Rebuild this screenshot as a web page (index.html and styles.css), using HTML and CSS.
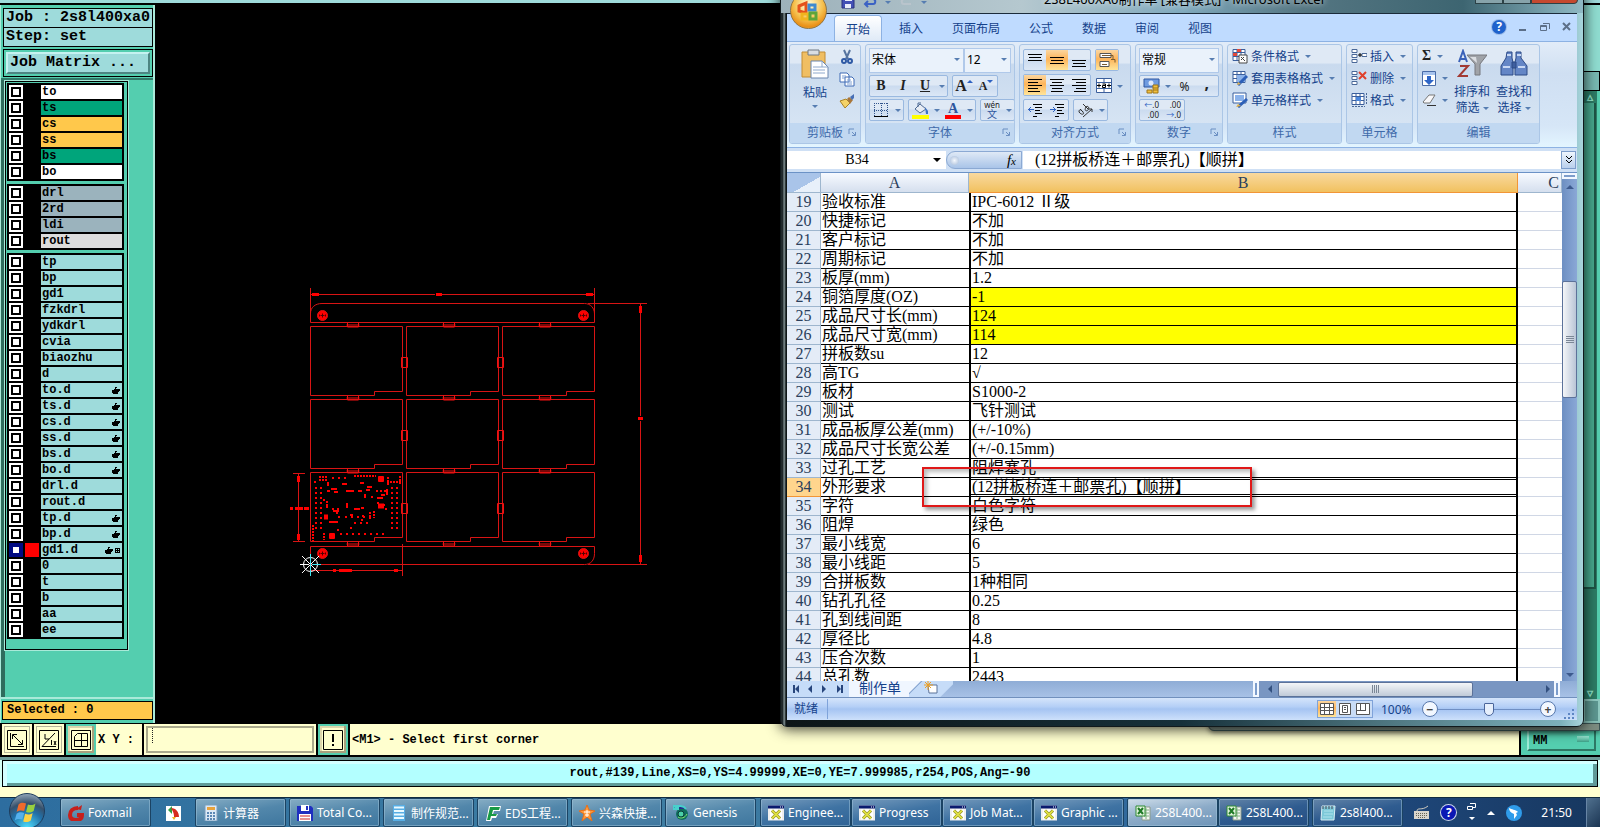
FILE: index.html
```
<!DOCTYPE html>
<html lang="zh-CN">
<head>
    <meta charset="UTF-8">
    <meta name="viewport" content="width=device-width, initial-scale=1.0">
    <title>Genesis - 2s8l400xa0</title>
    <link rel="stylesheet" href="styles.css">
</head>
<body>
    <!-- shared icons -->
    <svg class="defs" aria-hidden="true">
        <symbol id="hand" viewBox="0 0 8 7"><path d="M3 0h2v1H4v1h4v2H7v1H6v2H1V6H0V3h2V2h1z"/></symbol>
        <symbol id="xapp" viewBox="0 0 16 15">
            <path d="M0 0h16v15H0z" fill="#eee"/><path d="M0 0h16v3H0z" fill="#0a1a6e"/><path d="M12 1h1v1h-1zM14 1h1v1h-1z" fill="#fff"/>
            <path d="M2 4h12v10H2z" fill="#fff"/><path d="M4 5l8 8M12 5l-8 8" stroke="#76761a" stroke-width="3"/><path d="M4 5l8 8M12 5l-8 8" stroke="#dede42" stroke-width="2"/>
        </symbol>
        <symbol id="xls" viewBox="0 0 16 16">
            <path d="M7 2h8v13H7z" fill="#f4f6f2" stroke="#8a9a8a"/><path d="M9 5h5M9 8h5M9 11h5M11 3v11" stroke="#7fb07f"/>
            <path d="M1 1h9v10H1z" fill="#e4f4df" stroke="#2f8b33"/><path d="M3 3l5 6M8 3L3 9" stroke="#1f7a26" stroke-width="2"/>
        </symbol>
        <symbol id="table" viewBox="0 0 16 15">
            <path d="M1 1h12v11H1z" fill="#fff" stroke="#3b5f9c"/><path d="M1 4h12M1 8h12M5 1v11M9 1v11" stroke="#3b5f9c"/>
        </symbol>
        <symbol id="launch" viewBox="0 0 8 8"><path d="M1 6V1h5" fill="none" stroke="#6b8fc2"/><path d="M4 4l3 3M7.500 4v3.500H4" fill="none" stroke="#6b8fc2"/></symbol>
    </svg>

    <div class="workspace">
        <aside class="sidebar">
            <div class="job-head">
                <div class="job-line">Job : 2s8l400xa0</div>
                <div class="job-line">Step: set</div>
                <div class="matrix-frame"><button class="matrix">Job Matrix ...</button></div>
            </div>
            <div class="layer-area">
                <div class="layer-panel">
                    <div class="group">
                        <label class="layer white"><input type="checkbox"><i></i><span>to</span></label>
                        <label class="layer green"><input type="checkbox"><i></i><span>ts</span></label>
                        <label class="layer orange"><input type="checkbox"><i></i><span>cs</span></label>
                        <label class="layer orange"><input type="checkbox"><i></i><span>ss</span></label>
                        <label class="layer green"><input type="checkbox"><i></i><span>bs</span></label>
                        <label class="layer white"><input type="checkbox"><i></i><span>bo</span></label>
                    </div>
                    <div class="group">
                        <label class="layer slate"><input type="checkbox"><i></i><span>drl</span></label>
                        <label class="layer slate"><input type="checkbox"><i></i><span>2rd</span></label>
                        <label class="layer slate"><input type="checkbox"><i></i><span>ldi</span></label>
                        <label class="layer grey"><input type="checkbox"><i></i><span>rout</span></label>
                    </div>
                    <div class="group">
                        <label class="layer"><input type="checkbox"><i></i><span>tp</span></label>
                        <label class="layer"><input type="checkbox"><i></i><span>bp</span></label>
                        <label class="layer"><input type="checkbox"><i></i><span>gd1</span></label>
                        <label class="layer"><input type="checkbox"><i></i><span>fzkdrl</span></label>
                        <label class="layer"><input type="checkbox"><i></i><span>ydkdrl</span></label>
                        <label class="layer"><input type="checkbox"><i></i><span>cvia</span></label>
                        <label class="layer"><input type="checkbox"><i></i><span>biaozhu</span></label>
                        <label class="layer"><input type="checkbox"><i></i><span>d</span></label>
                        <label class="layer"><input type="checkbox"><i></i><span>to.d<svg><use href="#hand"/></svg></span></label>
                        <label class="layer"><input type="checkbox"><i></i><span>ts.d<svg><use href="#hand"/></svg></span></label>
                        <label class="layer"><input type="checkbox"><i></i><span>cs.d<svg><use href="#hand"/></svg></span></label>
                        <label class="layer"><input type="checkbox"><i></i><span>ss.d<svg><use href="#hand"/></svg></span></label>
                        <label class="layer"><input type="checkbox"><i></i><span>bs.d<svg><use href="#hand"/></svg></span></label>
                        <label class="layer"><input type="checkbox"><i></i><span>bo.d<svg><use href="#hand"/></svg></span></label>
                        <label class="layer"><input type="checkbox"><i></i><span>drl.d</span></label>
                        <label class="layer"><input type="checkbox"><i></i><span>rout.d</span></label>
                        <label class="layer"><input type="checkbox"><i></i><span>tp.d<svg><use href="#hand"/></svg></span></label>
                        <label class="layer"><input type="checkbox"><i></i><span>bp.d<svg><use href="#hand"/></svg></span></label>
                        <label class="layer active"><input type="checkbox" checked><i></i><span>gd1.d<svg><use href="#hand"/></svg><svg class="cross" viewBox="0 0 5 5"><path d="M0 .5h5M0 2.500h5M0 4.500h5M.5 0v5M2.500 0v5M4.500 0v5"/></svg></span></label>
                        <label class="layer"><input type="checkbox"><i></i><span>0</span></label>
                        <label class="layer"><input type="checkbox"><i></i><span>t</span></label>
                        <label class="layer"><input type="checkbox"><i></i><span>b</span></label>
                        <label class="layer"><input type="checkbox"><i></i><span>aa</span></label>
                        <label class="layer"><input type="checkbox"><i></i><span>ee</span></label>
                    </div>
                </div>
            </div>
            <div class="selected-frame"><div class="selected">Selected : 0</div></div>
        </aside>

        <main class="canvas">
            <svg class="board" width="560" height="600" viewBox="155 5 560 600" fill="none" stroke="#d81414">
                <defs>
                    <path id="cell" d="M0 0h92v65h-28v4H0z"/>
                    <path id="htab" d="M0-3.500v4.500h11v-4.500M-1-1h13"/>
                    <path id="vtab" d="M-3 0h6v10h-6z"/>
                    <g id="hole"><circle r="5" fill="#f00"/><path d="M-2 0h4M0-2v4M-3-1v2M3-1v2" stroke="#500"/></g>
                </defs>
                <!-- rails -->
                <path d="M310.500 322.500h284V314c0-6-4-10.500-10-10.500H322c-7 0-11.500 4-11.500 10zM310.500 546.500h284v7c0 7-4 11-10 11h-274z"/>
                <!-- cells -->
                <use href="#cell" x="310.500" y="326.500"/><use href="#cell" x="406.500" y="326.500"/><use href="#cell" x="502.500" y="326.500"/>
                <use href="#cell" x="310.500" y="399.500"/><use href="#cell" x="406.500" y="399.500"/><use href="#cell" x="502.500" y="399.500"/>
                <use href="#cell" x="310.500" y="472.500"/><use href="#cell" x="406.500" y="472.500"/><use href="#cell" x="502.500" y="472.500"/>
                <!-- bridges -->
                <g stroke="#f01010">
                    <use href="#htab" x="347.500" y="326"/><use href="#htab" x="443.500" y="326"/><use href="#htab" x="539.500" y="326"/>
                    <use href="#htab" x="347.500" y="399"/><use href="#htab" x="443.500" y="399"/><use href="#htab" x="539.500" y="399"/>
                    <use href="#htab" x="347.500" y="472"/><use href="#htab" x="443.500" y="472"/><use href="#htab" x="539.500" y="472"/>
                    <use href="#htab" x="347.500" y="545"/><use href="#htab" x="443.500" y="545"/><use href="#htab" x="539.500" y="545"/>
                    <use href="#vtab" x="404.500" y="357.500"/><use href="#vtab" x="500.500" y="357.500"/>
                    <use href="#vtab" x="404.500" y="430.500"/><use href="#vtab" x="500.500" y="430.500"/>
                    <use href="#vtab" x="404.500" y="503.500"/><use href="#vtab" x="500.500" y="503.500"/>
                </g>
                <use href="#hole" x="322.500" y="315.500"/><use href="#hole" x="583.500" y="315.500"/>
                <use href="#hole" x="322.500" y="553.500"/><use href="#hole" x="583.500" y="553.500"/>
                <!-- dimensions -->
                <path d="M310.500 288v28M594.500 288v28M311 294.500h124M442 294.500h152M588 303.500h59M588 564.500h59M640.500 304v112M640.500 421v143M293 473.500h12M293 541.500h12M298.500 474v67M402.500 544v32M311 570.500h91"/>
                <path d="M312 294.500h7M586 294.500h7M640.500 306v7M640.500 555v7M298.500 476v6M298.500 534v6M394 570.500h4" stroke="#f00" stroke-width="3"/>
                <path d="M436 294.500h6M638 418.500h5M333 570.500h3M339 570.500h13M290 508.500h3M295 508.500h8M304 508.500h5" stroke="#f00" stroke-width="3"/>
                <!-- parts on the first board -->
                <g stroke="#f00" stroke-width="2">
                    <path d="M316 487v44M321 487v44M392 487v44M397 487v44" stroke-dasharray="2 3"/>
                    <path d="M319 477h8M319 480h8M354 476h22M387 482h14M388 477v8M400 476v8" stroke-dasharray="2 1"/>
                    <path d="M332 478h18M340 534h44M345 517h26M354 523h14" stroke-dasharray="2 4"/>
                    <path d="M313 525v16M324 533v7M370 512v7M374 511v7" stroke-dasharray="2 1"/>
                    <path d="M346 491h8M358 491h4M376 491h2M380 491h2M384 491h4M387 489v6M365 494v4M328 482v4M331 489h6M334 492h4M327 491h3M347 503v5M327 504v4M333 511h4M338 508v4M354 509h6M361 508h3M329 522h9M314 482h2M342 484h5M360 483h4M367 487h5M366 490h4M371 497h2M377 498h6M381 495h4M377 503h2M381 505h4M385 509h2M350 515h3M361 520h2M362 516h2M338 517h2M350 528h2M337 530h2M323 500h2M326 502h2M332 509h2M336 513h2"/>
                    <path d="M378 479h6M381 476v6M378 506h6M329 536h6M332 533v6M324 517h4" stroke-width="5"/>
                </g>
                <!-- origin -->
                <g stroke="#fff"><circle cx="310.500" cy="564.500" r="7"/><path d="M302 556l17 17M319 556l-17 17M300 564.500h9"/><path d="M310.500 554v22M312 564.500h9" stroke="#3fe6f2"/></g>
            </svg>
        </main>

        <div class="rail">
            <div class="rail-box"></div>
            <div class="rail-track"><b>▵</b><i></i><b>▿</b></div>
            <div class="rail-end"></div>
        </div>
    </div>

    <div class="prompt">
        <button class="tool" aria-label="Zoom area"><svg viewBox="0 0 20 20"><path d="M.5.5h19v19H.5zM3.500 3v13.500H17M6 5l9 9M5.500 9V4.500H10M15.500 10v4.500H11"/></svg></button>
        <button class="tool" aria-label="Measure"><svg viewBox="0 0 20 20"><path d="M.5.5h19v19H.5zM3 16.500L16 3M3 16.500h14M6 4v5h4M12.500 10v5M15 11l2 4M17 11l-2 4"/></svg></button>
        <button class="tool teal" aria-label="Grid"><svg viewBox="0 0 20 20"><path d="M.5.5h19v19H.5zM3.500 6.500l3-3h10v13h-13zM3.500 10.500h13M10.500 3v13"/></svg></button>
        <label class="xy" for="xy">X Y :</label>
        <input class="xy-input" id="xy" type="text">
        <button class="tool teal alert" aria-label="Interrupt"><svg viewBox="0 0 20 20"><path d="M.5.5h19v19H.5z"/><path d="M10 4v8M10 14v2" stroke-width="2"/></svg></button>
        <div class="hint">&lt;M1&gt; - Select first corner</div>
        <div class="unit"><select aria-label="Units"><option>MM</option></select></div>
    </div>
    <div class="message"><div class="message-box">rout,#139,Line,XS=0,YS=4.99999,XE=0,YE=7.999985,r254,POS,Ang=-90</div></div>

    <div class="behind"></div>

    <section class="excel">
        <div class="title">
            <span class="quick">
                <svg width="14" height="14" viewBox="0 0 14 14"><path d="M1 1h12v12H1z" fill="#4350b5" stroke="#28307e"/><path d="M4 1h7v5H4zM4 9h6v4H4z" fill="#e8ecfa"/></svg>
                <svg width="14" height="14" viewBox="0 0 14 14" fill="none" stroke="#3c62c4" stroke-width="2"><path d="M2 9h8c3 0 3-5 0-5M5 6L2 9l3 3"/></svg>
                <span class="caret"></span>
                <svg width="14" height="14" viewBox="0 0 14 14" fill="none" stroke="#b9c4cc" stroke-width="2"><path d="M12 9H5C2 9 2 4 5 4"/></svg>
                <span class="caret"></span>
            </span>
            <span class="title-text">2S8L400XA0制作单 [兼容模式] - Microsoft Excel</span>
            <span class="title-buttons"><i></i><i></i><i class="close"></i></span>
        </div>
        <button class="orb" aria-label="Office">
            <svg viewBox="0 0 24 24" fill="none" stroke-width="3"><path d="M3 7l7-3v10l-7-2z" stroke="#e4521b"/><path d="M13 6h6v5h-6z" stroke="#3f8ad0"/><path d="M6 15h6v5H6z" stroke="#f0b41e"/><path d="M14 14h6v6h-6z" stroke="#5da53a"/></svg>
        </button>
        <div class="client">
            <nav class="tabs">
                <button class="tab on">开始</button>
                <button class="tab">插入</button>
                <button class="tab">页面布局</button>
                <button class="tab">公式</button>
                <button class="tab">数据</button>
                <button class="tab">审阅</button>
                <button class="tab">视图</button>
                <span class="tabs-right">
                    <button class="help" aria-label="Help">?</button>
                    <button aria-label="Minimize"><svg viewBox="0 0 10 10"><path d="M1 8h7" stroke-width="2"/></svg></button>
                    <button aria-label="Restore"><svg viewBox="0 0 10 10"><path d="M.5 3.500h6v5h-6zM3 1.500h6.500V7M.5 4.500h6"/></svg></button>
                    <button aria-label="Close"><svg viewBox="0 0 10 10"><path d="M1 1l7 7M8 1L1 8" stroke-width="2"/></svg></button>
                </span>
            </nav>

            <div class="ribbon">
                <div class="rg g-clip">
                    <div class="rg-body">
                        <button class="big paste">
                            <svg width="28" height="30" viewBox="0 0 28 30"><path d="M1 3h23v25H1z" fill="#f0be62" stroke="#c18c34"/><path d="M7 1h11v5H7z" fill="#d9dde2" stroke="#6f7882"/><path d="M10 12h11l6 6v11H10z" fill="#fff" stroke="#6b86ae"/><path d="M12 18h9M12 21h12M12 24h12M21 12v6h6" stroke="#8ea8cc" fill="none"/></svg>
                            粘贴<span class="caret"></span>
                        </button>
                        <div class="col">
                            <button aria-label="Cut"><svg width="16" height="16" viewBox="0 0 16 16" fill="none" stroke="#2f5aa5" stroke-width="2"><path d="M5 1l4 9M11 1L7 10" stroke="#56749f"/><circle cx="5" cy="12" r="2"/><circle cx="11" cy="12" r="2"/></svg></button>
                            <button aria-label="Copy"><svg width="16" height="16" viewBox="0 0 16 16"><path d="M1 2h7l2 2v7H1zM6 6h7l2 2v7H6z" fill="#fff" stroke="#3f6ab5"/><path d="M3 5h4M3 7h3M8 9h4M8 11h5M8 13h5" stroke="#7fa0d4"/></svg></button>
                            <button aria-label="Format painter"><svg width="16" height="16" viewBox="0 0 16 16"><path d="M1 8l6-2 4 4-5 5z" fill="#f4d268" stroke="#a98125"/><path d="M8 6l2-2 4 3-3 4z" fill="#a8763a"/><path d="M11 4l4-3v4l-2 2z" fill="#476fb5"/></svg></button>
                        </div>
                    </div>
                    <div class="rg-label">剪贴板<svg><use href="#launch"/></svg></div>
                </div>

                <div class="rg g-font">
                    <div class="rg-body rows">
                        <div class="row joined">
                            <span class="combo wide"><select aria-label="Font"><option>宋体</option></select></span>
                            <span class="combo"><select aria-label="Font size"><option>12</option></select></span>
                        </div>
                        <div class="row">
                            <span class="set"><button class="serif"><b>B</b></button><button class="serif"><b><i>I</i></b></button><button class="serif"><b><u>U</u></b></button><button class="drop" aria-label="Underline style"><span class="caret"></span></button></span>
                            <span class="set"><button class="serif grow"><b>A</b><span class="mark up"></span></button><button class="serif shrink"><b>A</b><span class="mark"></span></button></span>
                        </div>
                        <div class="row spread">
                            <span class="set"><button aria-label="Borders"><svg width="14" height="14" viewBox="0 0 14 14" stroke="#31548c"><path d="M.5 0v13M13.500 0v13M7.500 0v13M0 .5h14M0 7.500h14" stroke-dasharray="1 1"/><path d="M0 13.500h14" stroke="#000"/></svg></button><button class="drop" aria-label="Border style"><span class="caret"></span></button></span>
                            <span class="set"><button aria-label="Fill colour"><svg width="17" height="17" viewBox="0 0 17 17"><path d="M3 7l5-5 6 5-6 4z" fill="#e8edf4" stroke="#4e6a94"/><path d="M6 5V1h3" fill="none" stroke="#4e6a94"/><path d="M13 5l3 4v3h-2z" fill="#3e74c4"/><path d="M0 13h17v4H0z" fill="#ff0"/></svg></button><button class="drop" aria-label="Fill choices"><span class="caret"></span></button><button class="serif fontcolor"><b>A</b></button><button class="drop" aria-label="Colour choices"><span class="caret"></span></button></span>
                            <span class="set"><button class="wen"><small>wén</small><span>文</span></button><button class="drop" aria-label="Phonetic choices"><span class="caret"></span></button></span>
                        </div>
                    </div>
                    <div class="rg-label">字体<svg><use href="#launch"/></svg></div>
                </div>

                <div class="rg g-align">
                    <div class="rg-body rows">
                        <div class="row">
                            <span class="set"><button aria-label="Top"><svg class="ln" viewBox="0 0 14 14"><path d="M0 1.500h14M1 4.500h12M0 7.500h14"/></svg></button><button class="lit" aria-label="Middle"><svg class="ln" viewBox="0 0 14 14"><path d="M0 4.500h14M1 7.500h12M0 10.500h14"/></svg></button><button aria-label="Bottom"><svg class="ln" viewBox="0 0 14 14"><path d="M0 7.500h14M1 10.500h12M0 13.500h14"/></svg></button></span>
                            <span class="set"><button class="lit" aria-label="Wrap text"><svg width="17" height="17" viewBox="0 0 17 17" fill="#fff" stroke="#555"><path d="M1 1.500h11v4H1zM1 9.500h9v5H1z"/><path d="M3 3.500h11v4h-2M3 12.500h5M14 7.500h2v3" fill="none" stroke="#7a5a2e"/></svg></button></span>
                        </div>
                        <div class="row">
                            <span class="set"><button class="lit" aria-label="Left"><svg class="ln" viewBox="0 0 14 14"><path d="M0 1.500h14M0 4.500h10M0 7.500h14M0 10.500h10M0 13.500h12"/></svg></button><button aria-label="Centre"><svg class="ln" viewBox="0 0 14 14"><path d="M0 1.500h14M2 4.500h10M0 7.500h14M2 10.500h10M1 13.500h12"/></svg></button><button aria-label="Right"><svg class="ln" viewBox="0 0 14 14"><path d="M0 1.500h14M4 4.500h10M0 7.500h14M4 10.500h10M2 13.500h12"/></svg></button></span>
                            <span class="bare"><button aria-label="Merge cells"><svg width="16" height="15" viewBox="0 0 16 15"><path d="M.5.5h15v14H.5z" fill="#fff" stroke="#3b5f9c"/><path d="M0 4.500h16M0 10.500h16M8 0v4M8 11v4" stroke="#3b5f9c"/><path d="M1 7.500h4M11 7.500h4M3 5.500v4M13 5.500v4" stroke="#000"/><path d="M6.500 6h3v3.500h-3V7.500h3" fill="none" stroke="#000"/></svg></button><button class="drop" aria-label="Merge choices"><span class="caret"></span></button></span>
                        </div>
                        <div class="row">
                            <span class="set"><button aria-label="Decrease indent"><svg class="ln" viewBox="0 0 14 14"><path d="M5 1.500h9M7 4.500h7M7 7.500h5M7 10.500h7M5 13.500h4"/><path d="M6 6.500H0M3 4L.5 6.500 3 9" stroke="#2e62c2"/></svg></button><button aria-label="Increase indent"><svg class="ln" viewBox="0 0 14 14"><path d="M5 1.500h9M7 4.500h7M7 7.500h5M7 10.500h7M5 13.500h4"/><path d="M0 6.500h6M3 4l2.500 2.500L3 9" stroke="#2e62c2"/></svg></button></span>
                            <span class="set"><button aria-label="Orientation"><svg width="17" height="16" viewBox="0 0 17 16" fill="none" stroke="#333"><path d="M3 7l3 3M2 10c0-3 2-3 4 0s-2 3-4 0M6 2l5 5M9 5c2-2 4 1 2 3s-4 0-2-3M6 15l9-8M12 7h3v3"/></svg></button><button class="drop" aria-label="Orientation choices"><span class="caret"></span></button></span>
                        </div>
                    </div>
                    <div class="rg-label">对齐方式<svg><use href="#launch"/></svg></div>
                </div>

                <div class="rg g-num">
                    <div class="rg-body rows">
                        <div class="row"><span class="combo wide"><select aria-label="Number format"><option>常规</option></select></span></div>
                        <div class="row">
                            <span class="set fill"><button aria-label="Currency"><svg width="17" height="16" viewBox="0 0 17 16"><path d="M1 1h15v8H1z" fill="#6f9be0" stroke="#2f57a0"/><circle cx="8" cy="5" r="2.500" fill="#dce8fb"/><path d="M4 12h5v3H4zM10 7h5v8h-5z" fill="#f0c040" stroke="#a07718"/><path d="M10 10h5M10 12h5" stroke="#a07718"/></svg></button><button class="drop" aria-label="Currency choices"><span class="caret"></span></button><button>%</button><button class="comma"><b>,</b></button></span>
                        </div>
                        <div class="row">
                            <span class="set"><button class="dec"><span><em>←</em>.0</span><span>.00</span></button><button class="dec"><span>.00</span><span><em>→</em>.0</span></button></span>
                        </div>
                    </div>
                    <div class="rg-label">数字<svg><use href="#launch"/></svg></div>
                </div>

                <div class="rg g-style">
                    <div class="rg-body list">
                        <button><svg class="ic"><use href="#table"/><path d="M5 1h4v3H5zM1 5h4v3H1z" fill="#e0483a"/><path d="M7 7h8v8H7z" fill="#fff" stroke="#444"/><path d="M9 9l4 4M9 12l3-3" stroke="#444"/></svg>条件格式<span class="caret"></span></button>
                        <button><svg class="ic"><use href="#table"/><path d="M5 5h8v7H5z" fill="#8bb2ea"/><path d="M6 15l9-9" stroke="#2c5fb8" stroke-width="3"/><path d="M5 15l4-1-3-2z" fill="#e8b64c"/></svg>套用表格格式<span class="caret"></span></button>
                        <button><svg class="ic"><path d="M1 1h13v10H1z" fill="#fff" stroke="#3b5f9c"/><path d="M3 3h9v6H3z" fill="#8bb2ea"/><path d="M6 15l9-8" stroke="#2c5fb8" stroke-width="3"/><path d="M4 15l5-1-3-2z" fill="#e8b64c"/></svg>单元格样式<span class="caret"></span></button>
                    </div>
                    <div class="rg-label">样式</div>
                </div>

                <div class="rg g-cell">
                    <div class="rg-body list">
                        <button><svg class="ic" fill="#fff" stroke="#4a6898"><path d="M1 1.500h5v3H1zM1 6.500h5v3H1zM1 11.500h5v3H1zM11 5.500h5v3h-5z"/><path d="M7 7h4M9 5v4" stroke="#000"/></svg>插入<span class="caret"></span></button>
                        <button><svg class="ic" fill="#fff" stroke="#4a6898"><path d="M1 1.500h5v3H1zM1 6.500h5v3H1zM1 11.500h5v3H1z"/><path d="M8 2l7 7M15 2L8 9" stroke="#e0402a" stroke-width="2"/></svg>删除<span class="caret"></span></button>
                        <button><svg class="ic"><use href="#table"/><path d="M5 5h5v4H5z" fill="#4a86dc"/><path d="M1 14.500h13M15.500 1v12" stroke="#4a6898" stroke-dasharray="2 1"/></svg>格式<span class="caret"></span></button>
                    </div>
                    <div class="rg-label">单元格</div>
                </div>

                <div class="rg g-edit">
                    <div class="rg-body">
                        <div class="list small">
                            <button class="serif"><b>Σ</b><span class="caret"></span></button>
                            <button aria-label="Fill"><svg width="14" height="15" viewBox="0 0 14 15"><path d="M.5.5h13v14H.5z" fill="#fff" stroke="#4a6ca8"/><path d="M1 1h12v3H1z" fill="#a8c4ee"/><path d="M5 5h4v4h3l-5 5-5-5h3z" fill="#2e66c8"/></svg><span class="caret"></span></button>
                            <button aria-label="Clear"><svg width="14" height="12" viewBox="0 0 14 12"><path d="M1 8l6-7h6l-5 8H2z" fill="#f8f8fa" stroke="#777"/><path d="M5 11.500h9" stroke="#333"/></svg><span class="caret"></span></button>
                        </div>
                        <button class="big two">
                            <svg width="30" height="30" viewBox="0 0 30 30"><path d="M2 13L6 2l4 11M3 10h6" fill="none" stroke="#3b62b8" stroke-width="2"/><path d="M3 17h8L2 27h9" fill="none" stroke="#a23a34" stroke-width="2"/><path d="M10 6h20l-7 9v11h-5V15z" fill="#a0a3a8" stroke="#77797e"/><path d="M13 8h6l1 6z" fill="#dcdee2"/></svg>
                            <span>排序和</span><span>筛选<span class="caret"></span></span>
                        </button>
                        <button class="big two">
                            <svg width="30" height="30" viewBox="0 0 30 30" stroke="#2d4a86"><path d="M8 3h5v6l1 4v13H2v-9l5-8zM17 3h5v6l6 8v9H16V13l1-4z" fill="#6486c6"/><path d="M13 13h4v6h-4z" fill="#3f5f9f"/><path d="M4 18h7M19 18h7M8 6h4M18 6h4" stroke="#c8d8f4" stroke-width="2"/></svg>
                            <span>查找和</span><span>选择<span class="caret"></span></span>
                        </button>
                    </div>
                    <div class="rg-label">编辑</div>
                </div>
            </div>

            <div class="formula">
                <input class="name-box" aria-label="Name box" value="B34">
                <span class="name-arrow"></span>
                <span class="fx"><i></i><em>f<small>x</small></em></span>
                <input class="formula-input" aria-label="Formula" value="(12拼板桥连＋邮票孔)【顺拼】">
                <button class="expand" aria-label="Expand"><svg viewBox="0 0 10 10"><path d="M2 1l3 3 3-3M2 5l3 3 3-3"/></svg></button>
            </div>

            <div class="sheet">
                <div class="sheet-view">
                    <table>
                        <colgroup><col class="c-row"><col class="c-a"><col><col class="c-c"></colgroup>
                        <thead><tr><th class="corner"></th><th>A</th><th class="cur">B</th><th class="last">C</th></tr></thead>
                        <tbody>
                            <tr><th>19</th><td>验收标准</td><td>IPC-6012 Ⅱ级</td><td></td></tr>
                            <tr><th>20</th><td>快捷标记</td><td>不加</td><td></td></tr>
                            <tr><th>21</th><td>客户标记</td><td>不加</td><td></td></tr>
                            <tr><th>22</th><td>周期标记</td><td>不加</td><td></td></tr>
                            <tr><th>23</th><td>板厚(mm)</td><td>1.2</td><td></td></tr>
                            <tr class="hl"><th>24</th><td>铜箔厚度(OZ)</td><td>-1</td><td></td></tr>
                            <tr class="hl"><th>25</th><td>成品尺寸长(mm)</td><td>124</td><td></td></tr>
                            <tr class="hl"><th>26</th><td>成品尺寸宽(mm)</td><td>114</td><td></td></tr>
                            <tr><th>27</th><td>拼板数su</td><td>12</td><td></td></tr>
                            <tr><th>28</th><td>高TG</td><td>√</td><td></td></tr>
                            <tr><th>29</th><td>板材</td><td>S1000-2</td><td></td></tr>
                            <tr><th>30</th><td>测试</td><td>飞针测试</td><td></td></tr>
                            <tr><th>31</th><td>成品板厚公差(mm)</td><td>(+/-10%)</td><td></td></tr>
                            <tr><th>32</th><td>成品尺寸长宽公差</td><td>(+/-0.15mm)</td><td></td></tr>
                            <tr><th>33</th><td>过孔工艺</td><td>阻焊塞孔</td><td></td></tr>
                            <tr class="sel"><th>34</th><td>外形要求</td><td>(12拼板桥连＋邮票孔)【顺拼】</td><td></td></tr>
                            <tr><th>35</th><td>字符</td><td>白色字符</td><td></td></tr>
                            <tr><th>36</th><td>阻焊</td><td>绿色</td><td></td></tr>
                            <tr><th>37</th><td>最小线宽</td><td>6</td><td></td></tr>
                            <tr><th>38</th><td>最小线距</td><td>5</td><td></td></tr>
                            <tr><th>39</th><td>合拼板数</td><td>1种相同</td><td></td></tr>
                            <tr><th>40</th><td>钻孔孔径</td><td>0.25</td><td></td></tr>
                            <tr><th>41</th><td>孔到线间距</td><td>8</td><td></td></tr>
                            <tr><th>42</th><td>厚径比</td><td>4.8</td><td></td></tr>
                            <tr><th>43</th><td>压合次数</td><td>1</td><td></td></tr>
                            <tr><th>44</th><td>总孔数</td><td>2443</td><td></td></tr>
                        </tbody>
                    </table>
                    <div class="callout"></div>
                </div>
                <div class="vscroll">
                    <span class="split"></span><span class="arr up"></span>
                    <span class="v-space"></span><span class="v-thumb"></span><span class="v-rest"></span>
                    <span class="arr down"></span>
                </div>
            </div>

            <div class="sheet-tabs">
                <svg class="nav" width="62" height="16" viewBox="0 0 62 16"><path d="M6 4h2v8H6zM12 4v8L8 8zM25 4v8l-4-4zM35 4v8l4-4zM50 4v8l4-4zM54 4h2v8h-2z" fill="#27457c"/></svg>
                <span class="sheet-tab">制作单</span>
                <span class="new-tab"><svg width="16" height="14" viewBox="0 0 16 14"><path d="M5 4h9v8H6z" fill="#fff" stroke="#5b7299"/><path d="M5 0v9M1 4h9M2 1l6 6M8 1L2 7" stroke="#f0a020"/></svg></span>
                <span class="hgrip"></span>
                <span class="hscroll"><i class="arr left"></i><i class="h-thumb"></i><i class="h-rest"></i><i class="arr right"></i></span>
                <span class="hgrip"></span>
                <span class="hcorner"></span>
            </div>
            <div class="status">
                <span class="ready">就绪</span>
                <span class="views">
                    <button class="lit" aria-label="Normal"><svg viewBox="0 0 14 12"><path d="M.5.5h13v11H.5zM0 4.500h14M0 7.500h14M4.500 0v12M9.500 0v12"/></svg></button>
                    <button aria-label="Page layout"><svg viewBox="0 0 14 12"><path d="M1.500.5h11v11h-11zM4.500 2.500h5v7h-5zM6 4.500h2M6 6.500h2"/></svg></button>
                    <button aria-label="Page break"><svg viewBox="0 0 14 12"><path d="M.5.5h13v11H.5zM4.500 0v7M9.500 0v7M0 7.500h10"/></svg></button>
                </span>
                <span class="pct">100%</span>
                <button class="zoom" aria-label="Zoom out">−</button>
                <input class="slider" type="range" aria-label="Zoom">
                <button class="zoom" aria-label="Zoom in">+</button>
                <svg class="grip" width="12" height="12" viewBox="0 0 12 12"><path d="M9 1h2v2H9zM9 5h2v2H9zM5 5h2v2H5zM9 9h2v2H9zM5 9h2v2H5zM1 9h2v2H1z" fill="#5d86c4"/></svg>
            </div>
        </div>
    </section>

    <footer class="taskbar">
        <button class="start" aria-label="Start">
            <svg viewBox="0 0 36 36"><path d="M9 11c3-2 5-2 8-1l-2 8c-3-1-5-1-8 1z" fill="#ee6a2c"/><path d="M19 11c3 1 5 1 8-1l-2 8c-3 2-5 2-8 1z" fill="#98cf3f"/><path d="M7 21c3-2 5-2 8-1l-2 7c-3-1-5-1-8 1z" fill="#55b0ec"/><path d="M16 21c3 1 5 1 8-1l-2 8c-3 2-5 2-8 1z" fill="#fbd245"/></svg>
        </button>
        <button class="task"><svg viewBox="0 0 16 16"><path d="M10 3c-5 0-8 3-8 7 0 3 2 5 6 5s6-2 6-5H9" fill="none" stroke="#c6201c" stroke-width="4"/><path d="M8 4l6-4-1 5z" fill="#c6201c"/></svg>Foxmail</button>
        <button class="task plain" aria-label="Launcher"><svg viewBox="0 0 16 16"><path d="M0 1h15v15H0z" fill="#fff"/><path d="M2 5l4-4v8z" fill="#2f9f40"/><path d="M5 3c5 0 8 4 8 9H8c0-4-1-5-3-9z" fill="#d62a1e"/><path d="M6 12h4l-2 3z" fill="#f0b420"/></svg></button>
        <button class="task"><svg viewBox="0 0 16 16"><path d="M2 0h12v16H2z" fill="#dce9f5" stroke="#7b9dbd"/><path d="M4 2h8v3H4z" fill="#e8a33c"/><path d="M4 8h8M4 11h8M4 14h8" stroke="#5b87b4" stroke-width="2" stroke-dasharray="2 1"/></svg>计算器</button>
        <button class="task"><svg viewBox="0 0 16 16"><path d="M0 1h14l2 2v13H0z" fill="#1f2fc0"/><path d="M4 0h8v6H4zM2 9h12v7H2z" fill="#fff"/><path d="M9 1h2v4H9z" fill="#1f2fc0"/><path d="M3 11h10M3 14h10" stroke="#c22" stroke-width="1"/></svg>Total Co...</button>
        <button class="task"><svg viewBox="0 0 16 16"><path d="M2 0h12v16H2z" fill="#58aee4"/><path d="M3 2.500h10M3 6h10M3 9.500h10M3 13h10" stroke="#eafaff" stroke-width="2"/></svg>制作规范...</button>
        <button class="task"><svg viewBox="0 0 16 16"><path d="M4 1h12l-1 5H9l-1 3h5l-2 4H7l-1 3H1z" fill="#fff"/><path d="M5 2h10l-1 3H8L7 9h5l-1 2H6l-1 4H2z" fill="#189a45"/></svg>EDS工程...</button>
        <button class="task"><svg viewBox="0 0 16 16"><path d="M8 0l2 5 6 1-5 3 2 7-5-4-5 4 2-7-5-3 6-1z" fill="#ff9a3c" stroke="#e8701a"/><path d="M5 7h6M8 5v7M6 10h4" stroke="#fff"/></svg>兴森快捷...</button>
        <button class="task last-single"><svg viewBox="0 0 16 16"><circle cx="9" cy="9" r="6" fill="#0f6e5e"/><circle cx="8" cy="9" r="3" fill="#4ad0a8" stroke="#0a3c38"/><path d="M1 4c4-5 10-3 12 0M0 1h5v3H0z" stroke="#48d0cc" stroke-width="2" fill="#23308c"/><path d="M5 12c3 2 7 1 9-3" stroke="#7fe36a" fill="none"/></svg>Genesis</button>
        <span class="stack">
            <button class="task"><svg><use href="#xapp"/></svg>Enginee...</button>
            <button class="task"><svg><use href="#xapp"/></svg>Progress</button>
            <button class="task"><svg><use href="#xapp"/></svg>Job Mat...</button>
            <button class="task"><svg><use href="#xapp"/></svg>Graphic ...</button>
        </span>
        <span class="stack">
            <button class="task active"><svg><use href="#xls"/></svg>2S8L400...</button>
            <button class="task"><svg><use href="#xls"/></svg>2S8L400...</button>
        </span>
        <button class="task dark"><svg viewBox="0 0 16 16"><path d="M2 1h13l-1 14H1z" fill="#7cc8d8" stroke="#d8eef4"/><path d="M3 1v3M6 1v3M9 1v3M12 1v3" stroke="#445"/><path d="M4 6h9M4 9h9M3 12h9" stroke="#aee2ec"/></svg>2s8l400...</button>
        <div class="tray">
            <svg width="16" height="16" viewBox="0 0 16 16"><path d="M0 6h15v8H0z" fill="#d9d5cc"/><path d="M2 8.500h12M2 10.500h12M4 12.500h7" stroke="#665" stroke-dasharray="1 1"/><path d="M3 6c0-4 5 0 11-5" stroke="#cfcabf" fill="none"/></svg>
            <span class="q">?</span>
            <svg width="9" height="20" viewBox="0 0 9 20" fill="none" stroke="#fff"><path d="M3 .5h5.500v4H6M.5 3.500h5v3h-5z"/><path d="M2 14h6l-3 3z" fill="#fff" stroke="none"/></svg>
            <svg width="8" height="4" viewBox="0 0 8 4"><path d="M4 0l4 4H0z" fill="#fff"/></svg>
            <svg width="16" height="16" viewBox="0 0 16 16"><circle cx="8" cy="8" r="8" fill="#2f9cea"/><path d="M3 3c3 2 6 1 9 4l-2 1 1 2-3 4V9C5 8 3 6 3 3z" fill="#fff"/></svg>
            <span class="clock">21:50</span>
        </div>
        <button class="desk" aria-label="Show desktop"></button>
    </footer>
</body>
</html>
```
FILE: styles.css
```
* {
    box-sizing: border-box;
}
body {
    margin: 0;
    height: 100vh;
    display: flex;
    flex-direction: column;
    position: relative;
    overflow: hidden;
    background-color: #ffffcf;
    font-family: "Noto Sans", "Noto Sans CJK SC", sans-serif;
    font-size: 12px;
}
button, input, select {
    font: inherit;
    color: inherit;
    margin: 0;
    padding: 0;
    border: 0;
    border-radius: 0;
    background: none;
    appearance: none;
}
svg {
    flex: none;
}
.defs {
    position: absolute;
    width: 0;
    height: 0;
}

/* CAD workspace */
.workspace {
    flex: 1;
    min-height: 0;
    display: flex;
    background-color: #000;
    border-top: 3px solid #9edbdb;
    padding-top: 2px;
}
.sidebar, .prompt, .message {
    font-family: "Liberation Mono", monospace;
    font-weight: bold;
}
.sidebar {
    width: 155px;
    flex: none;
    display: flex;
    flex-direction: column;
    background-color: #54ceaf;
    border-left: 1px solid #a9ead9;
    border-right: 2px solid #a9ead9;
}
.job-head {
    padding: 3px 0 1px 2px;
    border-bottom: 2px solid #2f7a68;
    font-size: 15px;
}
.job-line {
    height: 20px;
    border: 1px solid #000;
    line-height: 18px;
    padding-left: 2px;
    background-color: #9edbdb;
    white-space: nowrap;
}
.job-line + .job-line {
    border-top: 0;
    height: 19px;
}
.matrix-frame {
    margin-top: 2px;
    border: 1px solid #000;
    padding: 2px;
}
.matrix {
    display: block;
    width: 100%;
    height: 22px;
    text-align: left;
    padding-left: 2px;
    background-color: #9edbdb;
    border: 2px solid;
    border-color: #c5f2f0 #4d8582 #4d8582 #c5f2f0;
    line-height: 18px;
}
.layer-area {
    flex: 1;
    border-left: 4px solid #2f6c5d;
    padding-top: 1px;
}
.layer-panel {
    width: 123px;
    border: 1px solid #000;
    outline: 1px solid #a9ead9;
    padding: 1px 3px 10px 1px;
    display: flex;
    flex-direction: column;
    gap: 3px;
    background-color: #54ceaf;
}
.group {
    background-color: #000;
    padding: 2px;
    display: grid;
    gap: 2px;
}
.layer {
    display: grid;
    grid-template-columns: 14px 14px 1fr;
    gap: 2px;
    height: 14px;
}
.layer input {
    width: 14px;
    height: 14px;
    background-color: #fff;
    border: 2px solid #fff;
    box-shadow: inset 0 0 0 2px #000;
}
.layer span {
    display: flex;
    align-items: center;
    gap: 2px;
    font-size: 12px;
    line-height: 14px;
    padding: 0 2px 0 1px;
    background-color: #9edbdb;
}
.layer svg {
    width: 8px;
    height: 7px;
    margin-left: auto;
}
.layer .cross {
    width: 5px;
    height: 5px;
    margin-left: 0;
    stroke: #000;
}
.white span { background-color: #fff; }
.green span { background-color: #00a57b; }
.orange span { background-color: #ffc84b; }
.slate span { background-color: #9bb3bd; }
.grey span { background-color: #dcdcdc; }
.layer.active i {
    background-color: #f00;
}
.layer.active input {
    border: 4px solid #000a82;
    box-shadow: none;
}
.selected-frame {
    border-top: 2px solid #a9ead9;
    padding: 2px 0 3px 1px;
}
.selected {
    border: 1px solid #000;
    background-color: #ffc84b;
    height: 19px;
    line-height: 17px;
    padding-left: 4px;
}
.canvas {
    flex: 1;
    min-width: 0;
    overflow: hidden;
}
.board {
    display: block;
}
.rail {
    width: 17px;
    flex: none;
    display: flex;
    flex-direction: column;
    background-color: #8fdcd0;
    padding-top: 66px;
}
.rail-box {
    height: 20px;
    border: 1px solid #000;
    background-color: #78b9b2;
}
.rail-track {
    flex: 1;
    display: flex;
    flex-direction: column;
    align-items: center;
    background-color: #2c7c66;
    border-right: 3px solid #54ceaf;
    color: #8fe6cd;
    line-height: 12px;
}
.rail-track i {
    width: 12px;
    flex: 0 1 486px;
    background-color: #47a98e;
    border-right: 2px solid #1e5446;
    border-bottom: 2px solid #1e5446;
}
.rail-track b {
    font-size: 12px;
}
.rail-track b:last-child {
    margin-top: auto;
}
.rail-end {
    height: 24px;
    background-color: #5c9690;
    border: 2px solid #8fc9c0;
}

/* prompt line */
.prompt {
    flex: none;
    height: 34px;
    display: flex;
    align-items: stretch;
    gap: 2px;
    border-top: 1px solid #000;
    border-bottom: 2px solid #000;
    background-color: #000;
    padding-left: 2px;
}
.tool {
    width: 30px;
    background-color: #ffffcf;
    border: 2px solid #ffffcf;
    display: flex;
    align-items: center;
    justify-content: center;
    box-shadow: inset 0 0 0 1px #b5b59a;
}
.tool svg {
    width: 20px;
    height: 20px;
    fill: none;
    stroke: #000;
}
.tool.teal {
    border-color: #54ceaf;
    background-color: #ffffcf;
    box-shadow: inset -2px -2px #a89e7c, inset 2px 2px #dcd6ac;
}
.xy {
    width: 46px;
    margin-left: -2px;
    line-height: 33px;
    padding-left: 2px;
    background-color: #ffffcf;
    white-space: nowrap;
}
/* dotted bar is the idle text cursor */
.xy-input {
    width: 172px;
    border: 2px solid #ffffcf;
    box-shadow: inset 0 0 0 2px #a9a98b;
    background: repeating-linear-gradient(#222 0 1px, transparent 1px 2px) 6px 2px / 1px 15px no-repeat #ffffcf;
}
.hint {
    flex: 1;
    line-height: 33px;
    padding-left: 2px;
    background-color: #ffffcf;
}
.unit {
    width: 79px;
    background-color: #54ceaf;
    padding: 3px 4px 4px 6px;
    display: flex;
}
.unit select {
    width: 100%;
    padding: 3px 0 0 4px;
    border: 2px solid;
    border-color: #9debd6 #2d7965 #2d7965 #9debd6;
    background: linear-gradient(#9debd6, #3c9f86) right 5px center / 12px 6px no-repeat;
}
.message {
    flex: none;
    height: 40px;
    padding: 3px 2px 10px;
    background: linear-gradient(#6d9b98 3px, #d5fff5 3px, #d5fff5 30px, #ffffcf 30px);
}
.message-box {
    height: 27px;
    border: 1px solid #000;
    background-color: #b3ffff;
    box-shadow: inset 4px 3px #d4ffff, inset -4px -3px #5f9b98;
    text-align: center;
    line-height: 25px;
}

/* lower edge of the window under Excel */
.behind {
    position: absolute;
    left: 1208px;
    right: 0;
    bottom: 96px;
    height: 8px;
    border: 1px solid #3b5353;
    border-radius: 0 0 0 6px;
    background-color: #7c8c80;
    box-shadow: 0 2px 5px #0008;
}

/* Excel window */
.excel {
    position: absolute;
    left: 780px;
    right: 16px;
    top: -13px;
    bottom: 100px;
    display: flex;
    flex-direction: column;
    padding: 0 6px 6px;
    border: 1px solid #10191c;
    border-radius: 0 0 7px 7px;
    background: linear-gradient(90deg, #20292c 2px, #8fa0a2 3px, #0d1517 5px, #16303a 400px, #7db1bb 780px, #a9d5dc);
    box-shadow: 0 2px 14px #000c;
    color: #15428b;
}
.title {
    flex: none;
    height: 25px;
    position: relative;
    display: flex;
    align-items: center;
    justify-content: center;
    margin: 0 -6px;
    padding: 0 0 4px 4px;
    background: linear-gradient(90deg, #9db1ba, #b5c8cf 30%, #7fa9bd 50%, #557682 65%, #3d6571 85%, #8fb9c4);
    color: #000;
}
.title-text {
    font-size: 13px;
    text-shadow: 0 0 6px #fff;
}
.quick {
    position: absolute;
    left: 60px;
    bottom: 4px;
    display: flex;
    align-items: center;
    gap: 8px;
}
.title-buttons {
    position: absolute;
    right: 5px;
    bottom: 9px;
    display: flex;
    height: 16px;
}
.title-buttons i {
    width: 28px;
    border: 1px solid #2c4146;
    background-color: #87a3aa;
}
.title-buttons .close {
    width: 47px;
    background-color: #c5482f;
    border-radius: 0 0 4px 0;
}
.orb {
    position: absolute;
    left: 9px;
    top: 4px;
    width: 37px;
    height: 37px;
    border-radius: 50%;
    border: 1px solid #8d7445;
    background: radial-gradient(circle at 50% 35%, #fff3c4 10%, #f5c04d 50%, #e98f17 75%, #fbdc7c);
    z-index: 1;
}
.orb svg {
    width: 24px;
    height: 24px;
    margin: 5px;
    display: block;
}
.client {
    flex: 1;
    min-height: 0;
    display: flex;
    flex-direction: column;
    background-color: #bfdbff;
    border-top: 1px solid #1b2b3a;
}
.tabs {
    flex: none;
    height: 28px;
    display: flex;
    align-items: flex-end;
    padding-left: 47px;
    border-bottom: 1px solid #8db2e3;
}
.tab {
    height: 26px;
    padding: 0 14px 0 15px;
    white-space: nowrap;
}
.tab.on {
    padding: 0 11px;
    margin-right: 2px;
    border: 1px solid #8db2e3;
    border-bottom: 0;
    border-radius: 4px 4px 0 0;
    background: linear-gradient(#fff, #dfeaf7);
}
.tabs-right {
    margin: 0 5px 7px auto;
    display: flex;
    align-items: center;
    gap: 12px;
}
.tabs-right svg {
    display: block;
    width: 10px;
    height: 10px;
    fill: none;
    stroke: #5c6f88;
}
.help {
    width: 14px;
    height: 14px;
    border-radius: 50%;
    background-color: #1f62cc;
    color: #fff;
    font-weight: bold;
    line-height: 14px;
    box-shadow: 0 0 0 1px #9dbce8;
}
.ribbon {
    flex: none;
    height: 106px;
    display: flex;
    gap: 4px;
    padding: 2px 3px 3px 2px;
    background: linear-gradient(#e2ecf8, #cfdff2 30%, #d6e6f7 80%, #e3f5ff);
    border-bottom: 1px solid #8db2e3;
}
.rg {
    flex: none;
    display: flex;
    flex-direction: column;
    border: 1px solid #abc6e6;
    border-radius: 3px;
    background: linear-gradient(#dfe9f5 18%, #c9daee 20%, #dae7f5);
    overflow: hidden;
}
.g-clip { width: 72px; }
.g-font { width: 150px; }
.g-align { width: 112px; }
.g-num { width: 88px; }
.g-style { width: 115px; }
.g-cell { width: 67px; }
.g-edit { width: 123px; }
.rg-body {
    flex: 1;
    display: flex;
    padding: 3px 3px 2px;
    min-height: 0;
}
.rg-label {
    flex: none;
    height: 20px;
    line-height: 19px;
    text-align: center;
    position: relative;
    background-color: #c1d8f1;
    color: #3e6aaa;
}
.rg-label svg {
    position: absolute;
    right: 4px;
    bottom: 7px;
    width: 8px;
    height: 8px;
}
.caret {
    display: inline-block;
    border: 3px solid transparent;
    border-top-color: #567db1;
    border-bottom: 0;
    vertical-align: middle;
}
.big {
    display: flex;
    flex-direction: column;
    align-items: center;
    line-height: 16px;
    white-space: nowrap;
}
.paste {
    width: 44px;
    padding-top: 1px;
    gap: 4px;
}
.paste svg {
    margin-bottom: 2px;
}
.col {
    display: flex;
    flex-direction: column;
    gap: 6px;
    padding: 1px 0 0 2px;
}
.col svg {
    display: block;
}
.rows {
    flex-direction: column;
    gap: 2px;
}
.row {
    display: flex;
    gap: 4px;
}
.spread {
    justify-content: space-between;
}
.joined {
    gap: 0;
}
.combo {
    position: relative;
    width: 47px;
}
.combo.wide {
    flex: 1;
}
.combo::after {
    content: "";
    position: absolute;
    right: 4px;
    top: 10px;
    border: 3px solid transparent;
    border-top-color: #567db1;
    border-bottom: 0;
}
.combo select {
    display: block;
    width: 100%;
    height: 25px;
    padding: 0 0 3px 2px;
    border: 1px solid #b0c9ea;
    background-color: #eaf2fb;
    color: #000;
}
.set {
    display: flex;
    height: 22px;
    border: 1px solid #9ab9e0;
    border-radius: 2px;
    background: linear-gradient(#dfe9f5 45%, #cbdbef 50%, #dbe7f6);
}
.set.fill {
    flex: 1;
}
.set.fill button {
    flex: 1;
}
.set button {
    width: 22px;
    display: flex;
    align-items: center;
    justify-content: center;
    color: #222;
}
.set .drop, .bare .drop, .set.fill .drop {
    width: 11px;
    flex: none;
}
.set .comma {
    font-size: 16px;
    line-height: 12px;
    padding-bottom: 6px;
}
.set button.lit, .status .lit {
    background: linear-gradient(#fbd6a0, #fdb45a 45%, #ffe59a);
}
.bare {
    display: flex;
    align-items: center;
}
.bare svg {
    display: block;
    margin: 0 2px 0 1px;
}
.g-align .row {
    height: 22px;
}
.g-align .rows {
    gap: 3px;
    padding-top: 4px;
}
.serif {
    font-family: "Liberation Serif", serif;
    font-size: 14px;
    color: #222;
}
.serif.grow {
    font-size: 16px;
}
.mark {
    align-self: flex-start;
    margin-top: 4px;
    border: 3px solid transparent;
    border-top-color: #2e62c2;
    border-bottom: 0;
}
.mark.up {
    border-top: 0;
    border-bottom: 3px solid #2e62c2;
}
.shrink b {
    font-size: 12px;
}
.set .fontcolor b {
    color: #2f569e;
    border-bottom: 4px solid #f00;
    width: 16px;
    line-height: 13px;
}
.set .wen {
    flex-direction: column;
    font-size: 10px;
    line-height: 11px;
    color: #2f569e;
}
.wen small {
    font-size: 8px;
    line-height: 9px;
    color: #222;
}
.ln {
    width: 14px;
    height: 14px;
    stroke: #000;
    fill: none;
}
.set .dec {
    flex-direction: column;
    font-size: 8px;
    line-height: 10px;
    align-items: flex-end;
    padding-right: 3px;
}
.dec em {
    font-style: normal;
    color: #2e62c2;
}
.list {
    flex-direction: column;
    padding-top: 0;
}
.list button {
    height: 22px;
    display: flex;
    align-items: center;
    gap: 3px;
    padding-left: 1px;
    white-space: nowrap;
}
.list .caret {
    margin-left: 3px;
}
.ic {
    width: 16px;
    height: 16px;
}
.ic use {
    width: 16px;
    height: 15px;
}
.g-edit .rg-body {
    padding: 0 3px;
}
.small {
    width: 30px;
}
.two {
    width: 42px;
    color: #15428b;
}
.two .caret {
    margin-left: 3px;
}
.two svg {
    margin: 4px 0 5px;
}

/* formula bar */
.formula {
    flex: none;
    height: 25px;
    display: flex;
    padding: 3px 1px 3px 0;
    background-color: #cfe0f5;
    border-bottom: 1px solid #6b92c6;
    font-family: "Liberation Serif", "Noto Sans CJK SC", serif;
    color: #000;
}
.name-box {
    width: 140px;
    text-align: center;
    font-size: 14px;
    background-color: #fff;
}
.name-arrow {
    width: 19px;
    background-color: #fff;
    display: flex;
    align-items: center;
}
.name-arrow::after {
    content: "";
    margin-left: 6px;
    border: 4px solid transparent;
    border-top-color: #000;
    border-bottom: 0;
}
.fx {
    width: 76px;
    margin-right: 1px;
    display: flex;
    align-items: center;
    justify-content: space-between;
    padding: 0 5px 0 3px;
    border: 1px solid #8ba9d3;
    border-radius: 9px 0 0 9px;
    background: linear-gradient(#dfe9f6, #a9c4e8);
    font-size: 15px;
}
.fx i {
    width: 9px;
    height: 9px;
    border-radius: 50%;
    background: radial-gradient(#f4f8fd, #a3b9d8);
}
.fx small {
    font-size: 11px;
}
.formula-input {
    flex: 1;
    min-width: 0;
    padding-left: 12px;
    font-size: 16px;
    line-height: 18px;
    background-color: #fff;
}
.expand {
    width: 15px;
    border: 1px solid #7d9dcb;
    background: linear-gradient(#eef5fd, #b9cfec);
}
.expand svg {
    width: 10px;
    height: 10px;
    display: block;
    margin: 0 auto;
    fill: none;
    stroke: #000;
}

/* sheet */
.sheet {
    flex: 1;
    min-height: 0;
    display: flex;
}
.sheet-view {
    flex: 1;
    min-width: 0;
    position: relative;
    overflow: hidden;
    background-color: #fff;
}
table {
    width: 100%;
    table-layout: fixed;
    border-collapse: separate;
    border-spacing: 0;
    font-family: "Liberation Serif", "Noto Sans CJK SC", serif;
    font-size: 16px;
    color: #000;
}
.c-row { width: 34px; }
.c-a { width: 148px; }
.c-c { width: 44px; }
th, td {
    padding: 0;
    height: 19px;
    line-height: 18px;
    white-space: nowrap;
    overflow: hidden;
    text-align: left;
    font-weight: normal;
}
td {
    border-bottom: 1px solid #000;
    padding-left: 1px;
}
td:nth-child(3) {
    border-left: 2px solid #000;
    border-right: 2px solid #000;
}
td:last-child {
    border-bottom-color: #d0d7e5;
}
th {
    text-align: center;
    color: #2b3f5c;
    background-color: #e4ecf7;
    border-right: 1px solid #9eb6ce;
    border-bottom: 1px solid #9eb6ce;
}
thead th {
    height: 20px;
    background: linear-gradient(#f7faff, #d5dfee);
}
thead .corner {
    background: linear-gradient(to top left, #e8f0fa 40%, #a9c4e9 40%);
}
thead .cur {
    background: linear-gradient(#f9d99f, #f1c15f);
    border-color: #f29536;
}
thead .last {
    text-align: right;
    padding-right: 2px;
}
.hl td:nth-child(3) {
    background-color: #ff0;
}
.sel th {
    background-color: #ffd58d;
    border-color: #f29536;
}
.sel td:nth-child(3) {
    box-shadow: inset 0 1px #fff, inset 0 2px #000, inset 0 -1px #fff, inset 0 -2px #000;
}
.callout {
    position: absolute;
    left: 135px;
    top: 294px;
    width: 330px;
    height: 40px;
    border: 2px solid #e01818;
    box-shadow: 3px 3px 4px #0006, inset 3px 3px 4px #0004;
}
.vscroll {
    width: 15px;
    flex: none;
    display: flex;
    flex-direction: column;
    align-items: center;
    background: linear-gradient(90deg, #6d8fc2, #8aa8d6);
}
.split {
    width: 100%;
    height: 6px;
    border: 2px solid #f3f8ff;
    background-color: #7d9dcb;
}
.arr {
    flex: none;
    border: 4px solid transparent;
}
.arr.up {
    border-bottom-color: #3d5a8d;
    margin-top: 2px;
}
.arr.down {
    border-top-color: #3d5a8d;
}
.v-space {
    flex: 92 1 0;
}
.v-thumb {
    width: 15px;
    flex: 115 1 0;
    border: 1px solid #5c7299;
    border-radius: 2px;
    background: repeating-linear-gradient(#7b8796 0 1px, transparent 1px 2px) center / 8px 7px no-repeat, linear-gradient(90deg, #f4f6f8, #b9c5d6);
}
.v-rest {
    flex: 276 1 0;
}

/* sheet tabs and status bar */
.sheet-tabs {
    flex: none;
    height: 17px;
    display: flex;
    background: linear-gradient(#8fadd6, #a7c1e6);
    border-bottom: 1px solid #7190bd;
}
.nav {
    background-color: #c6dcf8;
}
.sheet-tab {
    height: 16px;
    line-height: 16px;
    font-family: "Liberation Serif", "Noto Sans CJK SC", serif;
    font-size: 14px;
    padding: 0 8px 0 10px;
    background-color: #f0f6ff;
}
.new-tab {
    width: 44px;
    height: 16px;
    padding-left: 14px;
    background: linear-gradient(135deg, #f0f6ff 8px, #7d9dcb 9px, #c6dcf8 10px, #c6dcf8 33px, transparent 34px);
    margin-right: auto;
}
.hgrip {
    width: 6px;
    border: 2px solid #f3f8ff;
    background-color: #7d9dcb;
}
.hscroll {
    width: 295px;
    display: flex;
    align-items: center;
    padding-left: 5px;
    background-color: #7996c2;
}
.arr.left {
    border-right-color: #33507f;
}
.arr.right {
    border-left-color: #33507f;
}
.h-thumb {
    flex: 193 1 0;
    height: 15px;
    margin-left: 6px;
    border: 1px solid #5c7299;
    border-radius: 2px;
    background: repeating-linear-gradient(90deg, #7b8796 0 1px, transparent 1px 2px) center / 7px 8px no-repeat, linear-gradient(#f4f6f8, #c0cad8);
}
.h-rest {
    flex: 73 1 0;
}
.hcorner {
    width: 17px;
}
.status {
    flex: none;
    height: 22px;
    display: flex;
    align-items: center;
    padding-right: 2px;
    background: linear-gradient(#d5e5fb, #b4cff6 40%, #a5c4f2 50%, #cde0fb);
}
.ready {
    width: 41px;
    line-height: 20px;
    padding-left: 7px;
    border-right: 1px solid #7fa3da;
    margin-right: auto;
}
.views {
    display: flex;
    height: 18px;
    margin-right: 8px;
    border: 1px solid #7fa3da;
    background-color: #c9dcf5;
}
.views button {
    width: 18px;
}
.views svg {
    display: block;
    width: 14px;
    height: 12px;
    margin: 0 auto;
    fill: #fff;
    stroke: #555;
}
.pct {
    width: 41px;
}
.zoom {
    width: 16px;
    height: 16px;
    border: 1px solid #5878ac;
    border-radius: 50%;
    background-color: #f2f7ff;
    line-height: 13px;
    font-weight: bold;
    color: #444;
}
.slider {
    width: 102px;
    height: 15px;
    background: linear-gradient(#6f8fc4, #6f8fc4) center / 100% 1px no-repeat;
}
.slider::-webkit-slider-thumb {
    appearance: none;
    width: 10px;
    height: 13px;
    border: 1px solid #4a659b;
    border-radius: 1px 1px 5px 5px;
    background-color: #e6effc;
}
.grip {
    margin-left: 7px;
    align-self: flex-end;
}

/* taskbar */
.taskbar {
    flex: none;
    height: 30px;
    position: relative;
    display: flex;
    gap: 3px;
    padding-left: 60px;
    border-top: 1px solid #132c3f;
    background: linear-gradient(90deg, #2d6d9f, #3f7fa3 40%, #2f669b 75%, #1e4678 88%, #17375f);
    color: #fff;
}
.start {
    position: absolute;
    left: 9px;
    top: -5px;
    width: 36px;
    height: 36px;
    border-radius: 50%;
    border: 1px solid #1e3c5c;
    background: radial-gradient(circle at 50% 100%, #4ee0ff, #2170a8 45%, #37516c 65%, #b4c6d4);
}
.start svg {
    display: block;
    width: 34px;
    height: 34px;
}
.task {
    flex: 0 1 91px;
    min-width: 0;
    height: 29px;
    display: flex;
    align-items: center;
    gap: 4px;
    padding: 0 2px 0 7px;
    overflow: hidden;
    white-space: nowrap;
    border: 1px solid #1b4363;
    border-radius: 2px;
    box-shadow: inset 0 0 0 1px #9fc4da80;
    background: linear-gradient(170deg, #86adc4, #5287ab 50%, #3e769e);
}
.task svg {
    width: 16px;
    height: 16px;
}
.task.plain {
    flex-basis: 38px;
    border-color: transparent;
    box-shadow: none;
    background: none;
    padding: 0 11px;
}
.last-single {
    margin-right: 1px;
}
.stack {
    display: flex;
}
.stack .task {
    flex-basis: 91px;
    width: 91px;
    background: linear-gradient(170deg, #789cbd, #3f73a3 50%, #2f6396);
}
.stack .task.active {
    background: linear-gradient(170deg, #cfdeea, #8cabc8 50%, #6d94b8);
}
.stack .task.active + .task, .task.dark {
    background: linear-gradient(170deg, #6485a8, #2f5c90 50%, #244e82);
}
.tray {
    margin-left: auto;
    display: flex;
    align-items: center;
    gap: 11px;
    padding-right: 11px;
}
.q {
    width: 15px;
    height: 15px;
    border-radius: 50%;
    background-color: #0a17b4;
    box-shadow: 0 0 0 1px #cdd6ea;
    font-weight: bold;
    text-align: center;
    line-height: 15px;
}
.clock {
    margin-left: 8px;
}
.desk {
    width: 14px;
    border-left: 1px solid #6885a5;
    background: linear-gradient(135deg, #50718f, #1b3553);
}
```
